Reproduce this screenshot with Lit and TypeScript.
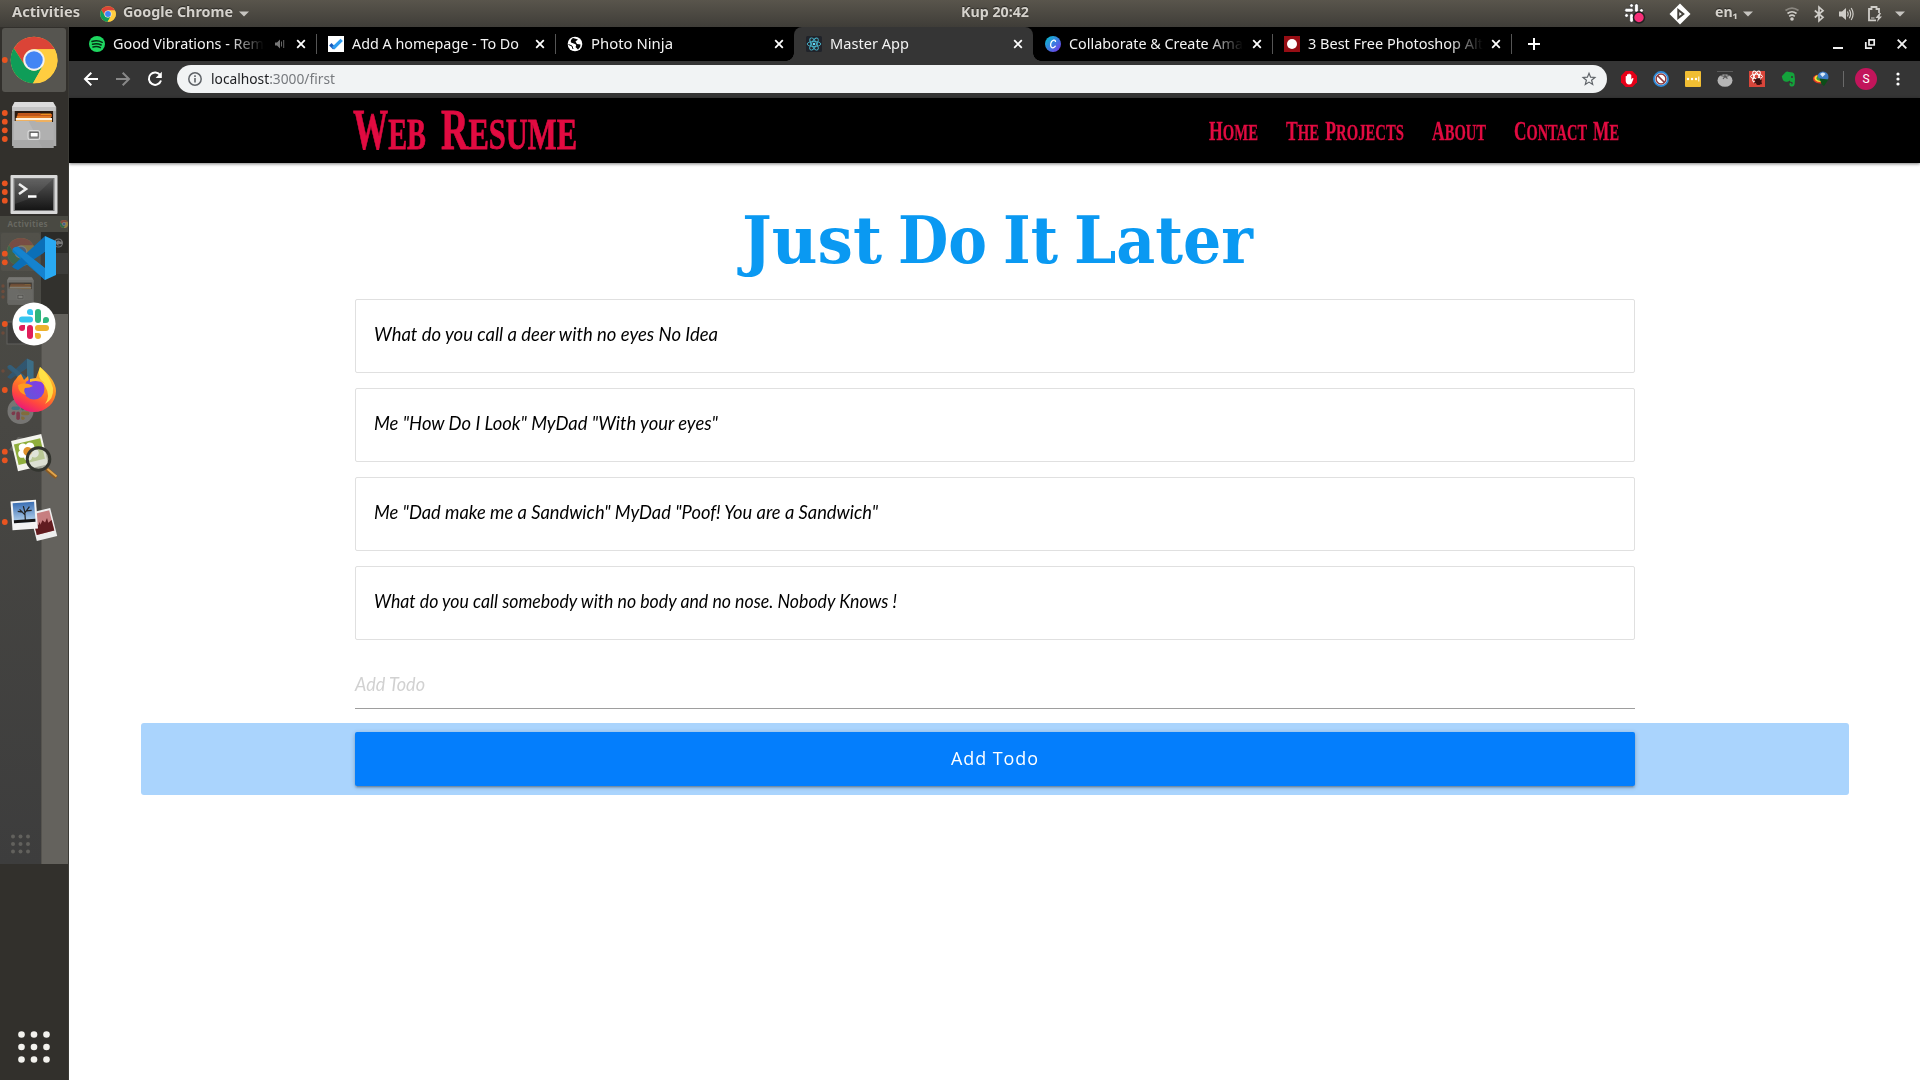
import { LitElement, html, svg, css } from "lit";
import { customElement, property } from "lit/decorators.js";

/* A single line of text condensed or expanded to a fixed advance width. */
@customElement("fit-label")
class FitLabel extends LitElement {
  @property({ type: Number }) width = 0;
  static styles = css`
    :host { display: block; white-space: nowrap; flex: none; }
    .in { display: inline-block; transform-origin: 0 50%; white-space: nowrap; vertical-align: top; }
  `;
  firstUpdated() {
    const el = this.renderRoot.querySelector(".in") as HTMLElement;
    this.style.width = this.width + "px";
    const natural = el.getBoundingClientRect().width;
    if (natural > 0) el.style.transform = `scaleX(${this.width / natural})`;
  }
  render() {
    return html`<span class="in"><slot></slot></span>`;
  }
}

const chromeLogo = (cx: number, cy: number, r: number) => svg`
  <g transform="translate(${cx} ${cy}) scale(${r / 24})">
    <circle r="24" fill="#ffcd40"/>
    <path d="M-20.8 -12A24 24 0 0 1 20.8 -12L20.8 -11H0A11 11 0 0 0 -9.5 5.5Z" fill="#db4437"/>
    <path d="M-20.8 -12A24 24 0 0 0 -1 24L9.5 5.5A11 11 0 0 1 -9.5 5.5Z" fill="#0f9d58"/>
    <path d="M0 -11H21.5A24 24 0 0 1 -1 24L9.5 5.5Z" fill="#ffcd40"/>
    <circle r="11" fill="#f1f1f1"/><circle r="9" fill="#4285f4"/>
  </g>`;

const slackMark = svg`
  <g>
    <rect x="-15" y="-7.5" width="14" height="6" rx="3" fill="#36c5f0"/>
    <path d="M-1 -9H-4A3 3 0 1 1 -1 -12Z" fill="#36c5f0"/>
    <rect x="1" y="-15" width="6" height="14" rx="3" fill="#2eb67d"/>
    <path d="M9 -1V-4A3 3 0 1 1 12 -1Z" fill="#2eb67d"/>
    <rect x="1" y="1" width="14" height="6" rx="3" fill="#ecb22e"/>
    <path d="M1 9H4A3 3 0 1 1 1 12Z" fill="#ecb22e"/>
    <rect x="-7" y="1" width="6" height="14" rx="3" fill="#e01e5a"/>
    <path d="M-9 1V4A3 3 0 1 1 -12 1Z" fill="#e01e5a"/>
  </g>`;

const filesIcon = svg`<g transform="translate(-.2 0) scale(1.065 1)">
  <path d="M14 102H50L53 107V146H11.500V107Z" fill="#aaa"/>
  <path d="M14 102H50L52.500 107H11.500Z" fill="#dcdcdc"/>
  <rect x="11.500" y="107" width="41" height="4" fill="#c4c4c4"/>
  <rect x="14" y="111" width="36" height="11" fill="#2a1a10"/>
  <path d="M17 113H38L39 114H49V117H16Z" fill="#c0561a"/><path d="M39 113.500H48V115H38Z" fill="#f09020"/>
  <path d="M16 116H48V119H15.500Z" fill="#e07a25"/><path d="M15 118H49V120H15Z" fill="#fff3e0"/><path d="M15 120H49V122H15Z" fill="#eeb060"/>
  <path d="M13 121H33L34.500 122H50.500V148H13Z" fill="#b0b0b0"/><path d="M13 121H27L40 148H13Z" fill="#c2c2c2" opacity=".5"/>
  <path d="M13 140H50.500V148H13Z" fill="#999" opacity=".5"/>
  <rect x="26.500" y="130.500" width="11" height="9" rx="2" fill="#999" stroke="#ddd"/><rect x="28.500" y="132.500" width="7.500" height="4.500" fill="#fff" stroke="#555" stroke-width=".8"/></g>`;

const vscodeIcon = svg`
  <path d="M12.500 249L18 246.500L48 271L45 280L12.500 252Z" fill="#0a7cc4"/>
  <path d="M12 266.500L45 236V252L18 270Q13 268 12 266.500Z" fill="#0b6fb8"/>
  <path d="M12.500 249Q15 246 18 247L45 268V280Z" fill="#1583cf"/>
  <path d="M45 236L56 241V275L45 280Z" fill="#29a9f2"/>`;

const gridDots = (xs: number[], ys: number[], r: number, fill: string) =>
  ys.flatMap((y) => xs.map((x) => svg`<circle cx=${x} cy=${y} r=${r} fill=${fill}/>`));

/* Dock artwork is drawn in screen coordinates; each tile shows its own 66px slice. */
const dock = [
  { name: "chrome", dots: [60], art: svg`<rect x="2" y="28" width="64" height="64" rx="3" fill="#565550"/>${chromeLogo(34, 60, 23.300)}` },
  { name: "files", dots: [113, 121.7, 130.3, 139], art: filesIcon },
  {
    name: "terminal", dots: [183.3, 192, 200.7], art: svg`
      <rect x="10.500" y="175" width="47" height="39" rx="1" fill="#d8d8d8"/>
      <rect x="13.500" y="178" width="41" height="33" fill="#777"/>
      <rect x="15" y="179" width="38" height="31" fill="url(#term)"/>
      <path d="M15 179H53L34 197L15 204Z" fill="#fff" opacity=".08"/>
      <path d="M19 184L26 189L19 194" fill="none" stroke="#eee" stroke-width="2.600"/><path d="M28 196.500H36.500" stroke="#fff" stroke-width="2.500"/>` },
  { name: "vscode", dots: [253.7, 262.3], art: vscodeIcon },
  { name: "slack", dots: [324], art: svg`<circle cx="34" cy="324" r="21.500" fill="#fff"/><g transform="translate(34 324)">${slackMark}</g>` },
  {
    name: "firefox", dots: [390], art: svg`
      <path d="M21 374L24 380L28 376L29 382L36 378L40 367Q56 380 56 391A22 21 0 0 1 12 391Q12 382 16 379Q17 376 21 374Z" fill="url(#fox)"/>
      <path d="M40 367Q50 376 53 388Q54 399 45 404Q51 396 45 386Q36 377 40 367Z" fill="#ffe94a" opacity=".85"/>
      <circle cx="34" cy="389" r="10.500" fill="url(#globe)"/>
      <path d="M18 385Q25 381 33 386Q30 388 25 388Q23 391 26 395Q18 393 18 385Z" fill="#ff9a1f"/>
      <path d="M30 379Q40 376 45 384Q38 379 30 382Z" fill="#ffbd30"/>` },
  {
    name: "viewer", dots: [451.7, 460.3], art: svg`
      <g transform="rotate(-13 30 452)"><rect x="14" y="437" width="31" height="31" fill="#f4f4ee"/><rect x="16" y="441" width="27" height="21" fill="#8fae3c"/>
      <g fill="#fff"><circle cx="24" cy="446" r="4"/><circle cx="31" cy="447" r="4.500"/><circle cx="22" cy="452" r="4"/><circle cx="27" cy="456" r="4"/><circle cx="34" cy="454" r="4.500"/></g><circle cx="28" cy="451" r="4.500" fill="#e0912b"/></g>
      <circle cx="38.500" cy="459" r="11.300" fill="#cfd6c4" fill-opacity=".65" stroke="#33352f" stroke-width="3"/>
      <path d="M46.500 469L56.500 477.500" stroke="#8a5a22" stroke-width="4.200"/><path d="M47.500 469L56.500 476.500" stroke="#e0a44c" stroke-width="2"/>` },
  {
    name: "photos", dots: [522], art: svg`
      <g transform="rotate(-14 43.500 524.500)"><rect x="33" y="510" width="21" height="29" fill="#eee"/><rect x="34.500" y="512" width="18" height="21" fill="#c77f80"/><path d="M34.500 533V523L36.500 525V520L38.500 524L40.500 521V524L43.500 520L45.500 523L48.500 519V524L52.500 522V533Z" fill="#611c20"/></g>
      <g transform="rotate(-4 24 515)"><rect x="11.500" y="500.500" width="25.500" height="29" fill="#f3f3f3"/><rect x="13.500" y="502.500" width="21.500" height="20" fill="url(#sky)"/><path d="M13.500 519.500H35V522.500H13.500Z" fill="#151515"/><path d="M25 520V511M25 515L20 509M25 513L30 507M23 512L18 511M27 511L32 511M25 512L24 506" stroke="#222" stroke-width="1.200"/></g>` },
];

const X_ICON = html`<svg class="x" width="10" height="10" viewBox="0 0 10 10"><path d="M1.200 1.200L8.800 8.800M8.800 1.200L1.200 8.800" stroke="#fff" stroke-width="1.800"/></svg>`;

const tabs = [
  { title: "Good Vibrations - Rem", w: 151, audio: true, icon: svg`<circle cx="8" cy="8" r="8" fill="#1ed760"/><path d="M3 5.500Q8.500 3.600 13.200 6.300M3.500 8.300Q8 6.800 12.200 9M4 11Q8 9.800 11.400 11.600" stroke="#062b13" stroke-width="1.500" fill="none" stroke-linecap="round"/>` },
  { title: "Add A homepage - To Do", w: 167, icon: svg`<rect width="16" height="16" fill="#fff"/><path d="M2.300 8.200L6.300 12.200" stroke="#185abd" stroke-width="3.400"/><path d="M5.200 12.200L13.700 3.900" stroke="#2f9df0" stroke-width="3.400"/>` },
  { title: "Photo Ninja", w: 82, icon: svg`<circle cx="8" cy="8" r="7.300" fill="#fff"/><path d="M6 2Q3 4 4 6.500L8 8Q10 9 8.500 11L11 13.500Q14 11 13.500 8.500L10 8L8.500 5.500L11 3.500Z" fill="#050505"/><path d="M1.500 8.500L5 10L6 13" stroke="#050505" fill="none"/>` },
  { title: "Master App", w: 79, active: true, icon: svg`<rect width="16" height="16" rx="1.500" fill="#20232a"/><g fill="none" stroke="#49b4cb" stroke-width=".9"><ellipse cx="8" cy="8" rx="6.800" ry="2.600"/><ellipse cx="8" cy="8" rx="6.800" ry="2.600" transform="rotate(60 8 8)"/><ellipse cx="8" cy="8" rx="6.800" ry="2.600" transform="rotate(120 8 8)"/></g><circle cx="8" cy="8" r="1.300" fill="#61dafb"/>` },
  { title: "Collaborate & Create Ama", w: 174, icon: svg`<defs><linearGradient id="cv" x2="1" y2="1"><stop stop-color="#00c4cc"/><stop offset=".5" stop-color="#3a7fe0"/><stop offset="1" stop-color="#7d2ae8"/></linearGradient></defs><circle cx="8" cy="8" r="8" fill="url(#cv)"/><path d="M10.500 6Q10.500 4 8.800 4.200Q5.800 5 5.600 9Q5.800 12 8 11.800Q9.800 11.500 10.600 9.800" stroke="#fff" stroke-width="1.300" fill="none"/>` },
  { title: "3 Best Free Photoshop Alt", w: 175, icon: svg`<rect width="16" height="16" fill="#960d14"/><circle cx="8" cy="8" r="5" fill="#fff"/>` },
];

const extensions = [
  svg`<path d="M4.700 0H11.300L16 4.700V11.300L11.300 16H4.700L0 11.300V4.700Z" fill="#e60018"/><path d="M4.700 8V5.200Q5.300 4.500 6 5.200V3.600Q6.700 2.900 7.400 3.600V2.900Q8.100 2.200 8.800 2.900V3.600Q9.700 3 10.300 3.900V8.500L11.200 7.200Q12.500 6.800 12.500 7.800L10.600 12.500Q9.800 13.500 8 13.500Q5 13.300 4.700 10Z" fill="#fff"/>`,
  svg`<circle cx="8" cy="8" r="7" fill="#fff" stroke="#2f8ad8" stroke-width="1.800"/><circle cx="8" cy="8" r="4.900" fill="none" stroke="#8d3b40" stroke-width="1.500"/><path d="M4.500 4.500L11.500 11.500" stroke="#8d3b40" stroke-width="1.700"/>`,
  svg`<rect width="16" height="16" rx="1" fill="#f1be33"/><g fill="#fff"><circle cx="3" cy="8" r="1.200"/><circle cx="7" cy="8" r="1.200"/><circle cx="11" cy="8" r="1.200"/><rect x="13.300" y="5.500" width="1" height="5"/></g>`,
  svg`<path d="M0 .5H16" stroke="#5a5a5a"/><ellipse cx="8" cy="9.500" rx="7.500" ry="6.300" fill="#b5b5b5"/><path d="M8 3V6M3.500 4.500L8 5.500L12.500 4.500M6 8L8 5.500L10.500 7.500" stroke="#555" stroke-width="1.200" fill="none"/>`,
  svg`<rect width="16" height="16" fill="#d9453a"/><g fill="none" stroke="#fff"><ellipse cx="7.500" cy="5.500" rx="6" ry="2.300"/><ellipse cx="7.500" cy="5.500" rx="6" ry="2.300" transform="rotate(60 7.500 5.500)"/><ellipse cx="7.500" cy="5.500" rx="6" ry="2.300" transform="rotate(120 7.500 5.500)"/></g><ellipse cx="9.300" cy="10.500" rx="3" ry="3.600" fill="#3b1212" transform="rotate(-35 9.300 10.500)"/><path d="M5 8L13 13M5 12L13 9M8 14L11 7" stroke="#3b1212"/>`,
  svg`<path d="M1 5L4.500 1.200Q6 0 8 1Q12.500 1 13.300 3Q14.500 8 13.700 13Q13 16 10.500 15.500Q8 15 8.500 12.500Q9 11.500 10.500 12Q10 13.500 11 13.500Q12 13 11.500 11.300Q9 11 8.500 9.500Q7 11.500 4 10.500Q1.500 10 .8 5Z" fill="#14a33b"/><circle cx="11" cy="6" r="1" fill="#333"/>`,
  svg`<circle cx="10" cy="6" r="5.500" fill="#3f7cc4"/><path d="M7 3Q10 0 12.500 3L9.500 6Z" fill="#dceaf7"/><path d="M4.500 3.500Q-1.500 5 .5 9.500Q3 13 9 12.500L7 9Q3.500 9 4.500 3.500Z" fill="#e33b27"/><path d="M4.500 4Q-.5 6 2.500 9.500Q5 11.500 9 11L8 8.500Q4 8.500 4.500 4Z" fill="#ffdc35"/><path d="M5 5Q2 7 4.500 9Q6 10 8.500 10L8 8Q5 8 5 5Z" fill="#3c9a3c"/><path d="M6.500 7.500L15.500 8.500L11 15L8.500 13Z" fill="#0d4d18"/>`,
];

const todos = [
  { text: "What do you call a deer with no eyes No Idea", w: 344 },
  { text: 'Me "How Do I Look" MyDad "With your eyes"', w: 344 },
  { text: 'Me "Dad make me a Sandwich" MyDad "Poof! You are a Sandwich"', w: 504 },
  { text: "What do you call somebody with no body and no nose. Nobody Knows !", w: 523 },
];

const links = [
  { words: ["Home"], w: 49 },
  { words: ["The", "Projects"], w: 118 },
  { words: ["About"], w: 54 },
  { words: ["Contact", "Me"], w: 105 },
];

const heading = [
  { text: "Just", w: 140 },
  { text: "Do", w: 89 },
  { text: "It", w: 55 },
  { text: "Later", w: 179 },
];

const caret = html`<svg width="10" height="6" viewBox="0 0 10 6"><path d="M0 .5H10L5 5.500Z" fill="#c6c4c0"/></svg>`;

@customElement("app-root")
class AppRoot extends LitElement {
  static styles = css`
    :host { display: flex; flex-direction: column; width: 1920px; height: 1080px; overflow: hidden; background: #fff;
      font-family: "Noto Sans", "Open Sans", sans-serif; }
    * { box-sizing: border-box; }
    svg { display: block; flex: none; overflow: visible; }

    .top { display: grid; grid-template-columns: 961px 68px 1fr; height: 27px; flex: none; align-items: center; color: #d5d2cc;
      background: linear-gradient(#59554c, #3f3d38); font: bold 13.5px/25px "Noto Sans", "Open Sans", sans-serif; text-shadow: 0 -1px 1px #2a2926; }
    .top fit-label { height: 27px; }
    .left, .right { display: flex; align-items: center; }
    .left { padding-left: 12px; }
    .left .logo { margin: 0 7px 0 20px; }
    .left .caret { margin-left: 6px; }
    .right { justify-content: flex-end; padding-right: 15px; }
    .lang { margin-left: 24px; margin-right: 5px; }
    .dia { margin-left: 24px; }
    .right .wifi { margin-left: 32px; }
    .right .bt { margin-left: 15px; }
    .right .vol { margin-left: 15px; }
    .right .bat { margin-left: 14px; }
    .right .end { margin-left: 13px; }

    .body { display: flex; flex: 1; min-height: 0; }
    .dock { position: relative; display: flex; flex-direction: column; width: 69px; background: #32302c; border-right: 1px solid #3c3b36; flex: none; }
    .ghost { position: absolute; left: 0; top: 0; }
    .tile, .apps { position: relative; }
    .apps { margin-top: auto; }

    .browser { display: flex; flex-direction: column; flex: 1; min-width: 0; }
    .tabs { display: flex; height: 34px; background: #000; flex: none; padding-left: 8px; color: #f3f3f3; font-size: 13.6px; line-height: 34px; }
    .tab { position: relative; display: flex; align-items: center; width: 239px; padding: 0 0 0 12px; flex: none; }
    .tab:not(.active)::after { content: ""; position: absolute; right: -1px; top: 7px; width: 1px; height: 20px; background: #555; }
    .tab.before::after { display: none; }
    .tab.active { background: #353535; border-radius: 8px 8px 0 0; }
    .tab.active::before, .tab.active i { content: ""; position: absolute; bottom: 0; width: 8px; height: 8px; }
    .tab.active::before { left: -8px; background: radial-gradient(circle at 0 0, transparent 7.5px, #353535 8px); }
    .tab.active i { right: -8px; background: radial-gradient(circle at 100% 0, transparent 7.5px, #353535 8px); }
    .tab fit-label { margin-left: 8px; }
    .fade { -webkit-mask-image: linear-gradient(90deg, #000 calc(100% - 34px), transparent 100%); mask-image: linear-gradient(90deg, #000 calc(100% - 34px), transparent 100%); }
    .x { margin-left: auto; margin-right: 10px; }
    .speaker { margin-left: 11px; }
    .plus { margin: 11px 0 0 17px; }
    .win { display: flex; margin-left: auto; padding: 12px 13px 0 0; gap: 22px; }

    .bar { display: flex; align-items: center; height: 37px; background: #353535; flex: none; padding: 0 14px 1px 14px; }
    .bar .nav { margin-right: 16px; }
    .url { display: flex; align-items: center; height: 28px; width: 1430px; border-radius: 14px; background: #f1f3f4; padding: 0 11px; margin-left: -2px; color: #777a7e; font-size: 14px; line-height: 27px; flex: none; }
    .url b { font-weight: normal; color: #202124; }
    .url fit-label { margin-left: 9px; margin-right: auto; height: 28px; }
    .exts { display: flex; gap: 16px; margin-left: 14px; }
    .sep { width: 1px; height: 16px; background: #6a6a6a; margin-left: 14px; }
    .avatar { width: 22px; height: 22px; border-radius: 50%; background: #c2155b; color: #fff; margin-left: 11px; font: 12px/22px Roboto, sans-serif; text-align: center; }
    .menu { margin-left: 19px; }

    .navbar { display: flex; justify-content: space-between; height: 65px; background: #000; color: #e10b41; padding: 0 300px 0 284px; flex: none;
      box-shadow: 0 1px 3px rgba(0,0,0,.5); font-family: "Liberation Serif", serif; font-weight: bold; text-transform: uppercase; }
    .word { display: inline-block; }
    .word + .word { margin-left: .42em; }
    .brand { display: flex; gap: 15px; font-size: 45px; line-height: 64px; -webkit-text-stroke: .8px #e10b41; }
    .brand .word::first-letter { font-size: 56px; }
    .links { display: flex; gap: 28px; font-size: 22.500px; line-height: 67px; margin-right: 1px; -webkit-text-stroke: .3px #e10b41; }
    .links .word::first-letter { font-size: 27px; }

    .page { display: flex; flex-direction: column; padding: 0 285px 0 286px; }
    h1 { display: flex; gap: 16px; margin: 0; height: 136px; padding: 34px 0 0 387px; color: #0a99f2; font: bold 66px/86px "DejaVu Serif Condensed", "DejaVu Serif", serif; }
    .list { display: flex; flex-direction: column; gap: 15px; }
    .card { height: 74px; border: 1px solid #e0e0e0; border-radius: 2px; padding: 18px 18px; }
    .script { font: italic 19px/32px Lato, sans-serif; color: #000; }
    .field { height: 69px; border-bottom: 1px solid #9e9e9e; padding-top: 28px; }
    .field .script { color: #d1d1d1; }
    .focus { margin: 14px -214px 0 -214px; height: 72px; background: #aad4fd; border-radius: 3px; padding: 9px 214px; }
    .btn { display: flex; justify-content: center; height: 54px; background: #047efc; color: #fff; border-radius: 2px; padding-right: 1px;
      box-shadow: 0 2px 2px rgba(0,0,0,.14), 0 3px 1px -2px rgba(0,0,0,.12), 0 1px 5px rgba(0,0,0,.2); font: 19px/52px "Open Sans", sans-serif; letter-spacing: 1px; }
  `;

  private topBar() {
    return html`<header class="top">
      <div class="left">
        <fit-label width="68">Activities</fit-label>
        <svg class="logo" width="16" height="16" viewBox="0 0 16 16">${chromeLogo(8, 8, 7.8)}</svg>
        <fit-label width="110">Google Chrome</fit-label>
        <span class="caret">${caret}</span>
      </div>
      <fit-label width="68">Kup 20:42</fit-label>
      <div class="right">
        <svg width="20" height="20" viewBox="0 0 20 20">
          <g transform="translate(9 9) scale(.62)" fill="#fff" stroke="#222" stroke-width="1"><rect x="-15" y="-7.500" width="14" height="6" rx="3"/><rect x="1" y="-15" width="6" height="14" rx="3"/><rect x="-7" y="1" width="6" height="14" rx="3"/><rect x="-7" y="-15" width="6" height="6" rx="3"/><rect x="9" y="-7" width="6" height="6" rx="3"/><rect x="-15" y="1" width="6" height="6" rx="3"/></g>
          <circle cx="14" cy="13.500" r="5.500" fill="#f72f78" stroke="#222" stroke-width="1.500"/></svg>
        <svg class="dia" width="22" height="22" viewBox="0 0 22 22"><path d="M11 .5L21.500 11L11 21.500L.5 11Z" fill="#fff"/><path d="M9.300 7L14.300 11L9.300 15Z" fill="#fff" stroke="#45423c" stroke-width="2"/></svg>
        <fit-label class="lang" width="23">en₁</fit-label>
        ${caret}
        <svg class="wifi" width="14" height="14" viewBox="0 0 14 14" fill="none" stroke-width="1.700"><path d="M.5 3.500Q7-1.200 13.500 3.500" stroke="#8a8780"/><path d="M2.500 6.500Q7 3 11.500 6.500M4.200 9.300Q7 7 9.800 9.300" stroke="#cfcdc8"/><circle cx="7" cy="12" r="1.800" fill="#cfcdc8"/></svg>
        <svg class="bt" width="10" height="16" viewBox="0 0 10 16"><path d="M.8 4.500L9 11.300L5 14.800V1.200L9 4.700L.8 11.500" fill="none" stroke="#cfcdc8" stroke-width="1.700"/></svg>
        <svg class="vol" width="15" height="14" viewBox="0 0 15 14"><path d="M0 4.500H3L7 1V13L3 9.500H0Z" fill="#cfcdc8"/><path d="M8.500 4.500Q10 7 8.500 9.500M10.300 2.800Q13 7 10.300 11.200M12.200 1Q16 7 12.200 13" fill="none" stroke="#cfcdc8" stroke-width="1.200"/></svg>
        <svg class="bat" width="14" height="16" viewBox="0 0 14 16"><path d="M8 14.300H1V3H3.500V1H8.500V3H11V7" fill="none" stroke="#cfcdc8" stroke-width="1.800"/><path d="M11.500 7L7.500 12H10L9 16L14 10.500H11.500L13 7Z" fill="#cfcdc8"/><path d="M3 12H6.500" stroke="#cfcdc8"/></svg>
        <span class="end">${caret}</span>
      </div>
    </header>`;
  }

  private dockBar() {
    return html`<aside class="dock">
      <svg class="ghost" width="69" height="1053" viewBox="0 27 69 1053">
        <defs>
          <linearGradient id="term" x2="0" y2="1"><stop stop-color="#555"/><stop offset="1" stop-color="#151515"/></linearGradient>
          <linearGradient id="gb" x2="0" y2="1"><stop stop-color="#4b4b45"/><stop offset=".3" stop-color="#484743"/><stop offset="1" stop-color="#3d3d3d"/></linearGradient>
          <linearGradient id="fox" x1=".8" x2=".3" y2="1"><stop stop-color="#ffd43a"/><stop offset=".45" stop-color="#ff8a1f"/><stop offset=".75" stop-color="#ff4640"/><stop offset="1" stop-color="#e8147f"/></linearGradient>
          <linearGradient id="globe" x1="1" x2="0" y2="1"><stop stop-color="#8a35e8"/><stop offset="1" stop-color="#5f5ad8"/></linearGradient>
          <linearGradient id="sky" x2="0" y2="1"><stop stop-color="#3b6fb4"/><stop offset="1" stop-color="#b9d5ee"/></linearGradient>
        </defs>
        <rect x="0" y="216" width="68" height="16" fill="#494942"/>
        <rect x="0" y="232" width="41" height="632" fill="url(#gb)"/>
        <rect x="41" y="232" width="27" height="21" fill="#2b2b28"/>
        <rect x="41" y="253" width="27" height="21" fill="#3d3d3b"/>
        <rect x="41" y="274" width="27" height="40" fill="#32312d"/>
        <rect x="41" y="314" width="27" height="550" fill="#64625d"/>
        <rect x="41" y="314" width="1" height="550" fill="#55534e"/>
        <text x="7.500" y="227" font-family="Noto Sans" font-weight="bold" font-size="8" textLength="40" fill="#686861">Activities</text>
        <g opacity=".4">${chromeLogo(64, 224, 4)}</g>
        <rect x="1" y="233" width="39" height="38" rx="2" fill="#56554f" opacity=".6"/>
        <g opacity=".28">${chromeLogo(21, 252, 14)}</g>
        <circle cx="58.500" cy="243" r="4.500" fill="#777"/><path d="M61 241.500A3 3 0 1 0 61 244.500H58.500" fill="none" stroke="#333" stroke-width="1.200"/>
        <g opacity=".3" transform="translate(0 216) scale(.6)">${filesIcon}</g>
        <g fill="#e95420" opacity=".22"><circle cx="3" cy="286" r="1.700"/><circle cx="3" cy="291.500" r="1.700"/><circle cx="3" cy="297" r="1.700"/><circle cx="3" cy="333" r="1.700"/><circle cx="3" cy="371" r="1.700"/></g>
        <rect x="7" y="322" width="28" height="22" fill="#333" stroke="#777" opacity=".5"/>
        <g opacity=".38" transform="translate(0 217) scale(.6)">${vscodeIcon}</g>
        <g opacity=".35"><circle cx="20.500" cy="411" r="13" fill="#ccc"/><g transform="translate(20.500 411) scale(.6)">${slackMark}</g></g>
        <path d="M9 450L18 437L24 438L17 452Z" fill="#9b9b94" opacity=".35"/>
        ${gridDots([13, 20.5, 28], [836.5, 844, 851.5], 2, "#62615d")}
      </svg>
      ${dock.map((d, i) => html`<svg class="tile" width="68" height="66" viewBox=${`0 ${27 + 66 * i} 68 66`}>
        ${d.art}${d.dots.map((y) => svg`<circle cx="4.800" cy=${y} r="2.900" fill="#e95420"/>`)}</svg>`)}
      <svg class="apps" width="68" height="66" viewBox="0 1014 68 66">${gridDots([21.5, 34, 46.5], [1034.5, 1047, 1059.5], 3.3, "#f3f2ee")}</svg>
    </aside>`;
  }

  private chrome() {
    return html`
      <div class="tabs">
        ${tabs.map((t: any, i) => html`<div class="tab ${t.active ? "active" : ""} ${i === 2 || i === 3 ? "before" : ""}">
          <svg width="16" height="16" viewBox="0 0 16 16">${t.icon}</svg>
          <fit-label class=${t.w > 170 || t.audio ? "fade" : ""} width=${t.w}>${t.title}</fit-label>
          ${t.audio ? html`<svg class="speaker" width="10" height="10" viewBox="0 0 10 10"><path d="M0 3.500H2L5 .5V9.500L2 6.500H0Z" fill="#777"/><path d="M6.500 2.500V7.500M8.700 1V9" stroke="#666" stroke-width="1"/></svg>` : ""}
          ${X_ICON}${t.active ? html`<i></i>` : ""}
        </div>`)}
        <svg class="plus" width="12" height="12" viewBox="0 0 12 12"><path d="M6 0V12M0 6H12" stroke="#fff" stroke-width="2"/></svg>
        <div class="win">
          <svg width="10" height="10" viewBox="0 0 10 10"><path d="M0 9H10" stroke="#f0f0f0" stroke-width="2"/></svg>
          <svg width="10" height="10" viewBox="0 0 10 10"><path d="M4 .8H9.200V6H4ZM.8 3V9.200H7" fill="none" stroke="#f0f0f0" stroke-width="1.700"/></svg>
          <svg width="10" height="10" viewBox="0 0 10 10"><path d="M.7 .7L9.300 9.300M9.300 .7L.7 9.300" stroke="#f0f0f0" stroke-width="1.900"/></svg>
        </div>
      </div>
      <div class="bar">
        <svg class="nav" width="16" height="16" viewBox="0 0 16 16"><path d="M15 8H2.500M8.300 1.700L2 8L8.300 14.300" fill="none" stroke="#fff" stroke-width="2"/></svg>
        <svg class="nav" width="16" height="16" viewBox="0 0 16 16"><path d="M1 8H13.500M7.700 1.700L14 8L7.700 14.300" fill="none" stroke="#888" stroke-width="2"/></svg>
        <svg class="nav" width="16" height="16" viewBox="0 0 16 16"><path d="M13.300 4.300A6.200 6.200 0 1 0 14 9.500" fill="none" stroke="#fff" stroke-width="2"/><path d="M14.800 .8V7H8.600Z" fill="#fff"/></svg>
        <div class="url">
          <svg width="14" height="14" viewBox="0 0 14 14"><circle cx="7" cy="7" r="6.200" fill="none" stroke="#5f6368" stroke-width="1.500"/><path d="M7 6V10.500M7 3.300V4.900" stroke="#5f6368" stroke-width="1.600"/></svg>
          <fit-label width="124"><b>localhost</b>:3000/first</fit-label>
          <svg width="14" height="14" viewBox="0 0 14 14"><path d="M7 1.300L8.600 5.200L12.900 5.500L9.600 8.200L10.700 12.400L7 10.100L3.300 12.400L4.400 8.200L1.100 5.500L5.400 5.200Z" fill="none" stroke="#5f6368" stroke-width="1.200"/></svg>
        </div>
        <div class="exts">${extensions.map((e) => html`<svg width="16" height="16" viewBox="0 0 16 16">${e}</svg>`)}</div>
        <span class="sep"></span>
        <span class="avatar">S</span>
        <svg class="menu" width="4" height="14" viewBox="0 0 4 14" fill="#fff"><circle cx="2" cy="2" r="1.600"/><circle cx="2" cy="7" r="1.600"/><circle cx="2" cy="12" r="1.600"/></svg>
      </div>`;
  }

  render() {
    return html`
      ${this.topBar()}
      <div class="body">
        ${this.dockBar()}
        <div class="browser">
          ${this.chrome()}
          <nav class="navbar">
            <div class="brand"><fit-label width="73"><span class="word">Web</span></fit-label> <fit-label width="136"><span class="word">Resume</span></fit-label></div>
            <div class="links">${links.map((l) => html`<fit-label width=${l.w}>${l.words.map((w) => html`<span class="word">${w}</span>`)}</fit-label>`)}</div>
          </nav>
          <main class="page">
            <h1>${heading.map((w) => html`<fit-label width=${w.w}>${w.text}</fit-label> `)}</h1>
            <div class="list">${todos.map((t) => html`<div class="card"><fit-label class="script" width=${t.w}>${t.text}</fit-label></div>`)}</div>
            <div class="field"><fit-label class="script" width="70">Add Todo</fit-label></div>
            <div class="focus"><div class="btn"><fit-label width="88">Add Todo</fit-label></div></div>
          </main>
        </div>
      </div>`;
  }
}
